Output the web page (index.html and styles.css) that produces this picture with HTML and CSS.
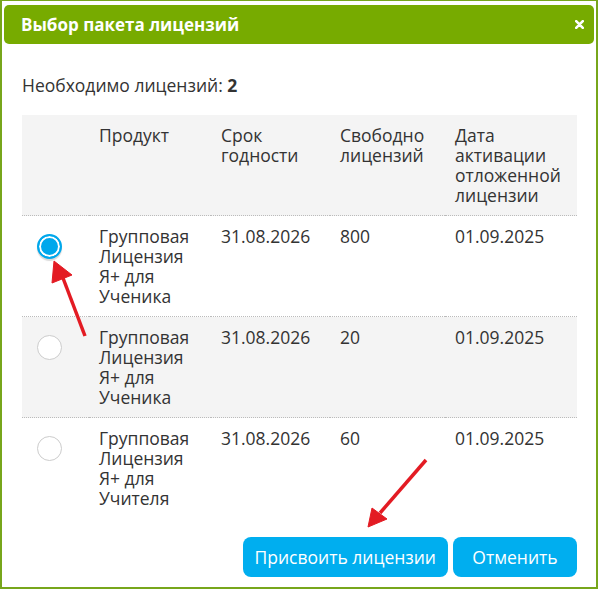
FILE: index.html
```html
<!DOCTYPE html>
<html lang="ru">
<head>
    <meta charset="UTF-8">
    <title>Выбор пакета лицензий</title>
    <link rel="stylesheet" href="styles.css">
</head>
<body>
    <div class="modal">
        <div class="modal-header">
            <h3 class="modal-title">Выбор пакета лицензий</h3>
            <button class="close" type="button">
                <svg width="9" height="9" viewBox="0 0 9 9"><path d="M1.2 1.2 L7.8 7.8 M7.8 1.2 L1.2 7.8" stroke="#fff" stroke-width="2.6" stroke-linecap="round"/></svg>
            </button>
        </div>

        <div class="modal-body">
            <p class="need">Необходимо лицензий: <b>2</b></p>

            <table class="license-table">
                <colgroup>
                    <col class="col-radio">
                    <col class="col-product">
                    <col class="col-date">
                    <col class="col-free">
                    <col class="col-activation">
                </colgroup>
                <thead>
                    <tr>
                        <th></th>
                        <th>Продукт</th>
                        <th>Срок годности</th>
                        <th>Свободно лицензий</th>
                        <th>Дата активации отложенной лицензии</th>
                    </tr>
                </thead>
                <tbody>
                    <tr>
                        <td><span class="radio checked"></span></td>
                        <td>Групповая Лицензия Я+ для Ученика</td>
                        <td>31.08.2026</td>
                        <td>800</td>
                        <td>01.09.2025</td>
                    </tr>
                    <tr class="odd">
                        <td><span class="radio"></span></td>
                        <td>Групповая Лицензия Я+ для Ученика</td>
                        <td>31.08.2026</td>
                        <td>20</td>
                        <td>01.09.2025</td>
                    </tr>
                    <tr>
                        <td><span class="radio"></span></td>
                        <td>Групповая Лицензия Я+ для Учителя</td>
                        <td>31.08.2026</td>
                        <td>60</td>
                        <td>01.09.2025</td>
                    </tr>
                </tbody>
            </table>

            <div class="form-actions">
                <button class="btn" type="button">Присвоить лицензии</button>
                <button class="btn btn-cancel" type="button">Отменить</button>
            </div>
        </div>
    </div>

    <!-- pointer arrows drawn over the dialog -->
    <svg class="arrows" width="600" height="590" viewBox="0 0 600 590">
        <g fill="#e31b23" stroke="#e31b23">
            <line x1="85" y1="336" x2="63" y2="278" stroke-width="3.5"/>
            <polygon points="54,261 52,283 72,275" stroke-width="1"/>
            <line x1="426" y1="460" x2="380" y2="513" stroke-width="3.5"/>
            <polygon points="368,527 372,508 387,519" stroke-width="1"/>
        </g>
    </svg>
</body>
</html>
```

FILE: styles.css
```css
* {
    margin: 0;
    padding: 0;
    box-sizing: border-box;
}

body {
    font-family: "Open Sans", "Liberation Sans", sans-serif;
    background: #fff;
    color: #333;
}

.modal {
    width: 598px;
    height: 589px;
    border: 2px solid #77a61b;
    border-top-width: 1px;
    background: #fff;
}

.modal-header {
    margin: 4px 2px 0;
    height: 39px;
    background: #77ab00;
    border-radius: 5px;
    display: flex;
    justify-content: space-between;
    align-items: center;
    padding: 0 10px 0 17px;
}

.modal-title {
    color: #fff;
    font-size: 17px;
    font-weight: 700;
}

.close {
    border: none;
    background: none;
    display: flex;
    cursor: pointer;
}

.modal-body {
    padding: 0 19px 0 20px;
}

.need {
    font-size: 17.5px;
    line-height: 22px;
    margin-top: 30px;
    margin-bottom: 19px;
}

.license-table {
    width: 555px;
    table-layout: fixed;
    border-collapse: collapse;
    font-size: 17.5px;
    line-height: 20px;
}

.col-radio { width: 67px; }
.col-product { width: 122px; }
.col-date { width: 119px; }
.col-free { width: 115px; }
.col-activation { width: 132px; }

.license-table th,
.license-table td {
    padding: 10px;
    text-align: left;
    vertical-align: top;
    font-weight: 400;
}

.license-table thead tr {
    background: #f4f4f4;
}

.license-table tbody tr {
    border-top: 1px dotted #bbb;
}

.license-table tr.odd {
    background: #f4f4f4;
}

.radio {
    display: block;
    width: 25px;
    height: 25px;
    margin: 8px 0 0 5px;
    border-radius: 50%;
    border: 1px solid #ccc;
    background: #fff;
}

.radio.checked {
    border: 2px solid #00a8ec;
    background: #00a8ec;
    box-shadow: inset 0 0 0 2px #fff, 0 2px 1px rgba(0,0,0,0.15);
}

.form-actions {
    display: flex;
    justify-content: flex-end;
    gap: 5px;
    margin-top: 19px;
}

.btn {
    height: 40px;
    padding: 0 12px;
    border: none;
    border-radius: 8px;
    background: #00aeef;
    color: #fff;
    font-family: inherit;
    font-size: 17.5px;
    cursor: pointer;
}

.btn-cancel {
    min-width: 124px;
}

.arrows {
    position: absolute;
    top: 0;
    left: 0;
    pointer-events: none;
}
```
